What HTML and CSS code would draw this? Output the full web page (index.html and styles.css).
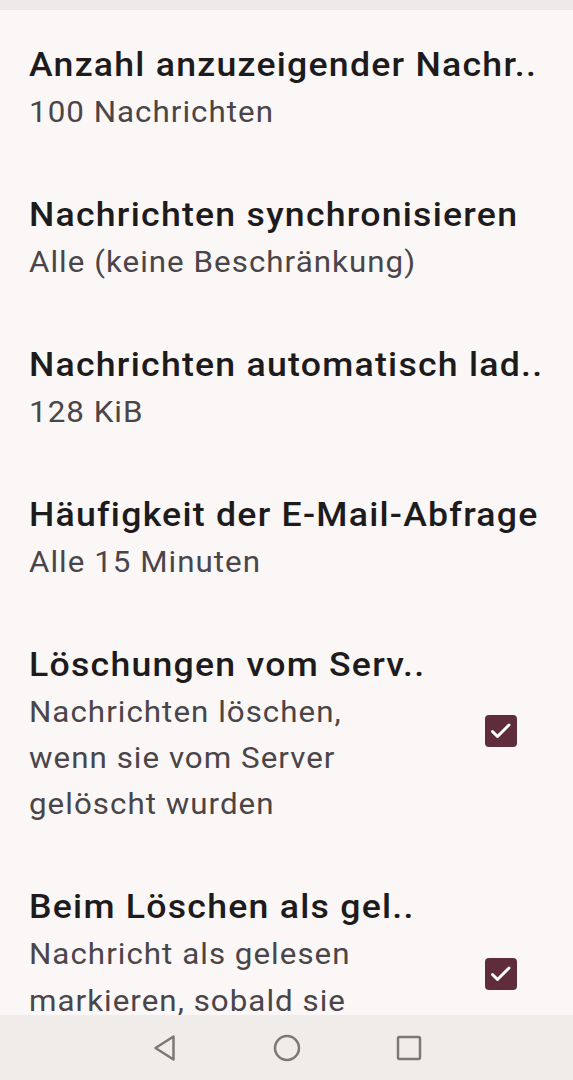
FILE: index.html
```html
<!DOCTYPE html>
<html lang="de">
<head>
<meta charset="utf-8">
<link rel="stylesheet" href="styles.css">
</head>
<body>
<div class="screen">
  <div class="status"></div>
  <div class="list">
    <div class="item">
      <div class="text">
        <div class="title">Anzahl anzuzeigender Nachr..</div>
        <div class="summary">100 Nachrichten</div>
      </div>
    </div>
    <div class="item">
      <div class="text">
        <div class="title">Nachrichten synchronisieren</div>
        <div class="summary">Alle (keine Beschränkung)</div>
      </div>
    </div>
    <div class="item">
      <div class="text">
        <div class="title">Nachrichten automatisch lad..</div>
        <div class="summary">128 KiB</div>
      </div>
    </div>
    <div class="item">
      <div class="text">
        <div class="title">Häufigkeit der E-Mail-Abfrage</div>
        <div class="summary">Alle 15 Minuten</div>
      </div>
    </div>
    <div class="item">
      <div class="text">
        <div class="title">Löschungen vom Serv..</div>
        <div class="summary wrap">Nachrichten löschen, wenn sie vom Server gelöscht wurden</div>
      </div>
      <div class="widget">
        <span class="checkbox"><svg viewBox="0 0 32 32" width="32" height="32"><path d="M7.5 16.5l5 5 11.5-11.5" fill="none" stroke="#fff" stroke-width="3" stroke-linecap="round" stroke-linejoin="round"/></svg></span>
      </div>
    </div>
    <div class="item">
      <div class="text">
        <div class="title">Beim Löschen als gel..</div>
        <div class="summary wrap">Nachricht als gelesen markieren, sobald sie gelöscht wird</div>
      </div>
      <div class="widget">
        <span class="checkbox"><svg viewBox="0 0 32 32" width="32" height="32"><path d="M7.5 16.5l5 5 11.5-11.5" fill="none" stroke="#fff" stroke-width="3" stroke-linecap="round" stroke-linejoin="round"/></svg></span>
      </div>
    </div>
  </div>
  <div class="navbar">
    <span class="nav-btn"><svg viewBox="0 0 26 28" width="26" height="28"><path d="M21.5 2.5v23L3.5 14z" fill="none" stroke="#7b7878" stroke-width="2.5" stroke-linejoin="round"/></svg></span>
    <span class="nav-btn"><svg viewBox="0 0 28 28" width="28" height="28"><circle cx="14" cy="14" r="12" fill="none" stroke="#7b7878" stroke-width="2.5"/></svg></span>
    <span class="nav-btn"><svg viewBox="0 0 26 26" width="26" height="26"><rect x="2" y="2" width="22" height="22" rx="1.5" fill="none" stroke="#7b7878" stroke-width="2.5"/></svg></span>
  </div>
</div>
</body>
</html>
```

FILE: styles.css
```css
html, body {
  margin: 0;
  padding: 0;
}
body {
  background: #fbf7f6;
  font-family: Roboto, "Noto Sans", sans-serif;
}
.screen {
  width: 573px;
  height: 1080px;
  display: flex;
  flex-direction: column;
  overflow: hidden;
}
.status {
  height: 10px;
  flex: none;
  background: #eeeae9;
}
.list {
  flex: 1;
  overflow: hidden;
  min-height: 0;
}
.item {
  display: flex;
  align-items: center;
  padding: 34.6px 0 25px 29px;
}
.text {
  flex: 1;
  min-width: 0;
  transform: scaleX(1.08);
  transform-origin: left center;
}
.title {
  font-size: 33px;
  font-weight: 500;
  line-height: 40px;
  color: #1d1b1c;
  white-space: nowrap;
  letter-spacing: 1.15px;
}
.summary {
  margin-top: 4px;
  font-size: 29px;
  line-height: 46.4px;
  color: #4a4549;
  white-space: nowrap;
  letter-spacing: 0.95px;
}
.summary.wrap {
  white-space: normal;
  width: 320px;
}
.widget {
  flex: none;
  display: flex;
  justify-content: flex-end;
  padding: 0 56px 11px 0;
}
.checkbox {
  width: 32px;
  height: 32px;
  border-radius: 4px;
  background: #5e2c3b;
  display: flex;
  align-items: center;
  justify-content: center;
}
.navbar {
  flex: none;
  height: 65px;
  background: #efecea;
  display: flex;
  align-items: center;
  justify-content: center;
  gap: 82px;
}
.nav-btn {
  width: 40px;
  display: flex;
  justify-content: center;
  align-items: center;
}
```
